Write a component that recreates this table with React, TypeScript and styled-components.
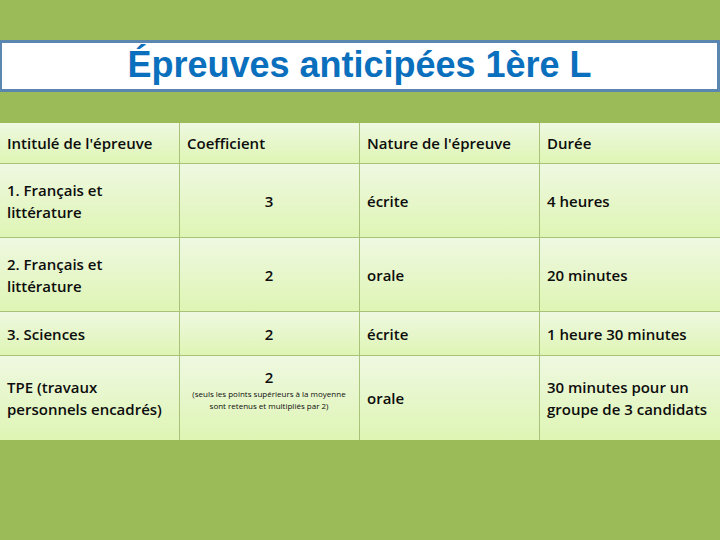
import React from "react";
import styled, { createGlobalStyle } from "styled-components";

const Global = createGlobalStyle`
  html, body {
    margin: 0;
    padding: 0;
    background: #9bbb59;
  }
`;

const rows = [
  { name: "1. Français et littérature", coef: "3", nature: "écrite", duree: "4 heures", h: 74 },
  { name: "2. Français et littérature", coef: "2", nature: "orale", duree: "20 minutes", h: 74 },
  { name: "3. Sciences", coef: "2", nature: "écrite", duree: "1 heure 30 minutes", h: 44 },
];

function App() {
  return (
    <Page>
      <Global />
      <TitleBox>
        <Title>Épreuves anticipées 1ère L</Title>
      </TitleBox>
      <Table>
        <Row h={41}>
          <Cell>Intitulé de l'épreuve</Cell>
          <Cell>Coefficient</Cell>
          <Cell>Nature de l'épreuve</Cell>
          <Cell>Durée</Cell>
        </Row>
        {rows.map((r) => (
          <Row h={r.h} key={r.name + r.coef + r.nature}>
            <Cell>{r.name}</Cell>
            <Cell center>{r.coef}</Cell>
            <Cell>{r.nature}</Cell>
            <Cell>{r.duree}</Cell>
          </Row>
        ))}
        <Row h={84}>
          <Cell>TPE (travaux personnels encadrés)</Cell>
          <Cell center>
            <Coef>
              2
              <Note>(seuls les points supérieurs à la moyenne sont retenus et multipliés par 2)</Note>
            </Coef>
          </Cell>
          <Cell>orale</Cell>
          <Cell>30 minutes pour un groupe de 3 candidats</Cell>
        </Row>
      </Table>
    </Page>
  );
}

export default App;

const Page = styled.div`
  width: 720px;
  height: 540px;
  padding-top: 40px;
  box-sizing: border-box;
  background: #9bbb59;
  overflow: hidden;
`;

const TitleBox = styled.div`
  height: 52px;
  box-sizing: border-box;
  border: 3px solid #5b86b0;
  border-left-width: 2px;
  background: #ffffff;
  display: flex;
  align-items: center;
  justify-content: center;
`;

const Title = styled.div`
  font-family: "Liberation Sans", Arial, sans-serif;
  font-size: 36px;
  font-weight: 700;
  color: #0a6fbd;
  margin-top: -3px;
`;

const Table = styled.div`
  margin-top: 31px;
  display: flex;
  flex-direction: column;
`;

const Row = styled.div<{ h: number }>`
  display: grid;
  grid-template-columns: 180px 180px 180px 180px;
  height: ${(p) => p.h}px;
  border-bottom: 1px solid #a9c27a;
  box-sizing: border-box;
  &:last-child {
    border-bottom: none;
  }
`;

const Cell = styled.div<{ center?: boolean }>`
  background: linear-gradient(#eff8e1, #def5b4);
  border-right: 1px solid #a9c27a;
  box-sizing: border-box;
  padding: 0 8px 0 7px;
  display: flex;
  align-items: center;
  justify-content: ${(p) => (p.center ? "center" : "flex-start")};
  font-family: "Open Sans", "Liberation Sans", sans-serif;
  font-weight: 600;
  font-size: 15px;
  line-height: 22px;
  color: #0d0d0d;
  &:last-child {
    border-right: none;
  }
`;

const Coef = styled.div`
  display: flex;
  flex-direction: column;
  align-items: center;
  text-align: center;
  margin-top: -18px;
`;

const Note = styled.div`
  font-size: 8px;
  font-weight: 400;
  line-height: 12px;
  max-width: 164px;
`;
